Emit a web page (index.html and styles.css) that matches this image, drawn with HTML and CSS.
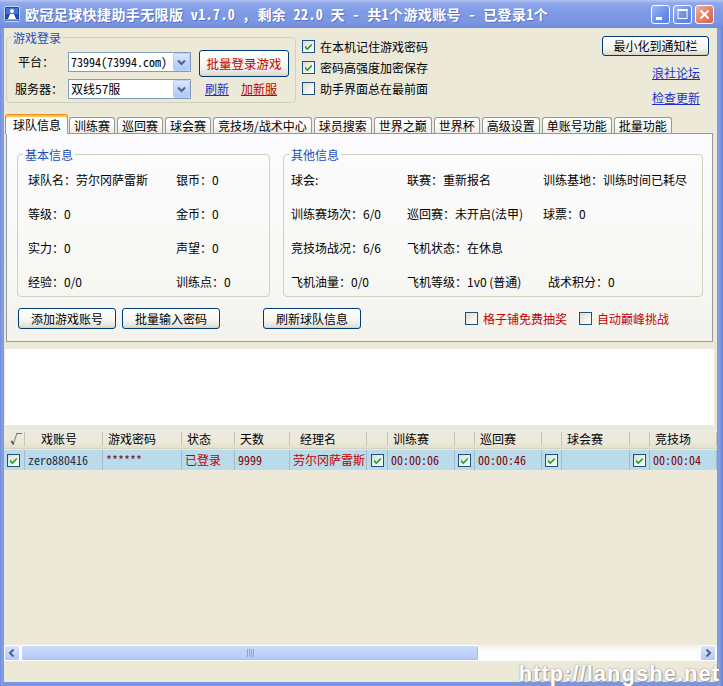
FILE: index.html
```html
<!DOCTYPE html>
<html lang="zh-CN">
<head>
<meta charset="utf-8">
<title>欧冠足球快捷助手无限版</title>
<link rel="stylesheet" href="styles.css">
</head>
<body>
<div class="window">
  <div class="titlebar">
    <span class="app-icon">
      <svg width="16" height="16" viewBox="0 0 16 16">
        <rect x="0.5" y="0.5" width="15" height="15" rx="1.5" fill="#1d4aa6" stroke="#c9d6f5"/>
        <rect x="2" y="2" width="12" height="6" fill="#3d78d8"/>
        <circle cx="8" cy="5" r="2" fill="#fff"/>
        <path d="M4 13 L6 8 L10 8 L12 13 Z" fill="#fff"/>
        <rect x="2" y="13" width="12" height="1.5" fill="#8fb0ea"/>
      </svg>
    </span>
    <span class="title">欧冠足球快捷助手无限版 v1.7.0 , 剩余 22.0 天 - 共1个游戏账号 - 已登录1个</span>
    <span class="tb-btns">
      <span class="tb-btn">
        <svg width="17" height="17" viewBox="0 0 17 17"><rect x="4" y="11" width="6" height="3" fill="#fff"/></svg>
      </span>
      <span class="tb-btn">
        <svg width="17" height="17" viewBox="0 0 17 17"><rect x="4" y="3.5" width="9" height="9" fill="none" stroke="#fff" stroke-width="1"/><rect x="4" y="3" width="9.5" height="2" fill="#fff"/></svg>
      </span>
      <span class="tb-btn close">
        <svg width="17" height="17" viewBox="0 0 17 17"><path d="M4.5 4.5 L12.5 12.5 M12.5 4.5 L4.5 12.5" stroke="#fff" stroke-width="2"/></svg>
      </span>
    </span>
  </div>

  <div class="client">
    <div class="top">
      <fieldset class="group login">
        <legend>游戏登录</legend>
        <div class="login-grid">
          <span class="lbl pt">平台：</span>
          <div class="combo"><span class="val mono">73994(73994.com)</span><span class="drop"><svg width="15" height="16" viewBox="0 0 15 16"><path d="M4 6.5 L7.5 10 L11 6.5" fill="none" stroke="#4d6185" stroke-width="2"/></svg></span></div>
          <button class="btn big red">批量登录游戏</button>
          <span class="lbl">服务器：</span>
          <div class="combo"><span class="val">双线57服</span><span class="drop"><svg width="15" height="16" viewBox="0 0 15 16"><path d="M4 6.5 L7.5 10 L11 6.5" fill="none" stroke="#4d6185" stroke-width="2"/></svg></span></div>
          <div class="srv-links"><a class="lnk blue">刷新</a><a class="lnk red">加新服</a></div>
        </div>
      </fieldset>

      <div class="opts">
        <label class="chk"><span class="box"><svg width="11" height="11" viewBox="0 0 11 11"><polygon points="2,4.6 4.3,6.9 8.8,2.4 8.8,4.7 4.3,9.2 2,6.9" fill="#21a121"/></svg></span>在本机记住游戏密码</label>
        <label class="chk"><span class="box"><svg width="11" height="11" viewBox="0 0 11 11"><polygon points="2,4.6 4.3,6.9 8.8,2.4 8.8,4.7 4.3,9.2 2,6.9" fill="#21a121"/></svg></span>密码高强度加密保存</label>
        <label class="chk"><span class="box"></span>助手界面总在最前面</label>
      </div>

      <div class="side">
        <button class="btn notify">最小化到通知栏</button>
        <a class="lnk blue l1">浪社论坛</a>
        <a class="lnk blue l2">检查更新</a>
      </div>
    </div>

    <div class="tabs">
      <span class="tab active">球队信息</span>
      <span class="tab">训练赛</span>
      <span class="tab">巡回赛</span>
      <span class="tab">球会赛</span>
      <span class="tab">竞技场/战术中心</span>
      <span class="tab">球员搜索</span>
      <span class="tab">世界之巅</span>
      <span class="tab">世界杯</span>
      <span class="tab">高级设置</span>
      <span class="tab">单账号功能</span>
      <span class="tab">批量功能</span>
    </div>

    <div class="pane">
      <div class="info">
        <fieldset class="group basic">
          <legend>基本信息</legend>
          <div class="grid-basic">
            <span>球队名：劳尔冈萨雷斯</span><span>银币：0</span>
            <span>等级：0</span><span>金币：0</span>
            <span>实力：0</span><span>声望：0</span>
            <span>经验：0/0</span><span>训练点：0</span>
          </div>
        </fieldset>
        <fieldset class="group other">
          <legend>其他信息</legend>
          <div class="grid-other">
            <span>球会:</span><span>联赛：重新报名</span><span>训练基地：训练时间已耗尽</span>
            <span>训练赛场次：6/0</span><span>巡回赛：未开启(法甲)</span><span>球票：0</span>
            <span>竞技场战况：6/6</span><span>飞机状态：在休息</span><span></span>
            <span>飞机油量：0/0</span><span>飞机等级：1v0 (普通)</span><span class="shift">战术积分：0</span>
          </div>
        </fieldset>
      </div>
      <div class="actions">
        <button class="btn act">添加游戏账号</button>
        <button class="btn act second">批量输入密码</button>
        <button class="btn act refresh">刷新球队信息</button>
        <label class="chk red-text lottery"><span class="box"></span>格子铺免费抽奖</label>
        <label class="chk red-text peak"><span class="box"></span>自动巅峰挑战</label>
      </div>
    </div>

    <div class="log"></div>

    <div class="list">
      <div class="lv-head">
        <span class="h c0">√</span>
        <span class="h c1">戏账号</span>
        <span class="h">游戏密码</span>
        <span class="h">状态</span>
        <span class="h">天数</span>
        <span class="h c5">经理名</span>
        <span class="h"></span>
        <span class="h">训练赛</span>
        <span class="h"></span>
        <span class="h">巡回赛</span>
        <span class="h"></span>
        <span class="h">球会赛</span>
        <span class="h"></span>
        <span class="h">竞技场</span>
      </div>
      <div class="lv-row">
        <span class="d ck"><span class="box"><svg width="11" height="11" viewBox="0 0 11 11"><polygon points="2,4.6 4.3,6.9 8.8,2.4 8.8,4.7 4.3,9.2 2,6.9" fill="#21a121"/></svg></span></span>
        <span class="d mono navy">zero880416</span>
        <span class="d mono maroon">******</span>
        <span class="d red-text">已登录</span>
        <span class="d mono maroon">9999</span>
        <span class="d red-text">劳尔冈萨雷斯</span>
        <span class="d ck ck4"><span class="box"><svg width="11" height="11" viewBox="0 0 11 11"><polygon points="2,4.6 4.3,6.9 8.8,2.4 8.8,4.7 4.3,9.2 2,6.9" fill="#21a121"/></svg></span></span>
        <span class="d mono maroon">00:00:06</span>
        <span class="d ck"><span class="box"><svg width="11" height="11" viewBox="0 0 11 11"><polygon points="2,4.6 4.3,6.9 8.8,2.4 8.8,4.7 4.3,9.2 2,6.9" fill="#21a121"/></svg></span></span>
        <span class="d mono maroon">00:00:46</span>
        <span class="d ck"><span class="box"><svg width="11" height="11" viewBox="0 0 11 11"><polygon points="2,4.6 4.3,6.9 8.8,2.4 8.8,4.7 4.3,9.2 2,6.9" fill="#21a121"/></svg></span></span>
        <span class="d"></span>
        <span class="d ck"><span class="box"><svg width="11" height="11" viewBox="0 0 11 11"><polygon points="2,4.6 4.3,6.9 8.8,2.4 8.8,4.7 4.3,9.2 2,6.9" fill="#21a121"/></svg></span></span>
        <span class="d mono maroon">00:00:04</span>
      </div>
      <div class="lv-fill"></div>
      <div class="hscroll">
        <span class="sb-btn"><svg width="14" height="14" viewBox="0 0 14 14"><path d="M8.5 3.5 L5 7 L8.5 10.5" fill="none" stroke="#4d6185" stroke-width="2"/></svg></span>
        <span class="thumb"><svg width="8" height="8" viewBox="0 0 8 8"><path d="M1.5 0 V8 M3.5 0 V8 M5.5 0 V8 M7.5 0 V8" stroke="#8ba3dc" stroke-width="1"/></svg></span>
        <span class="track"></span>
        <span class="sb-btn"><svg width="14" height="14" viewBox="0 0 14 14"><path d="M5.5 3.5 L9 7 L5.5 10.5" fill="none" stroke="#4d6185" stroke-width="2"/></svg></span>
      </div>
    </div>

    <div class="status"></div>
  </div>

  <div class="watermark">http://langshe.net</div>
</div>
</body>
</html>
```

FILE: styles.css
```css
* { box-sizing: border-box; }
html, body { margin: 0; padding: 0; }
body {
  width: 723px;
  height: 686px;
  overflow: hidden;
  background: #ece9d8;
  font: 12px/14px "Noto Sans CJK SC", "Liberation Sans", sans-serif;
  color: #000;
}
.mono { font-family: "Noto Sans Mono CJK SC", "Liberation Mono", monospace; }

.window {
  position: relative;
  width: 723px;
  height: 686px;
  display: flex;
  flex-direction: column;
  background: linear-gradient(90deg, #6f8ad8 0, #86a0e7 2px, #7b96e1 4px, #7b96e1 717px, #86a0e7 719px, #6680d2 723px);
}

/* title bar */
.titlebar {
  flex: none;
  height: 28px;
  display: flex;
  align-items: center;
  padding: 0 9px 0 4px;
  background: linear-gradient(#b4c5f3 0, #90a9ec 3px, #7f9ae5 12px, #7b96e2 22px, #6f8ad9 28px);
  color: #fff;
}
.app-icon { width: 16px; height: 16px; margin-right: 5px; display: flex; }
.title {
  flex: 1;
  white-space: nowrap;
  font-family: "Noto Sans Mono CJK SC", "Noto Sans CJK SC", monospace;
  font-weight: bold;
  font-size: 14px;
  line-height: 18px;
  letter-spacing: 0.4px;
  text-shadow: 1px 1px 0 #5a72c0;
}
.tb-btns { display: flex; gap: 3px; }
.tb-btn {
  width: 19px;
  height: 19px;
  border: 1px solid #fff;
  border-radius: 3px;
  background: linear-gradient(135deg, #9fb7f2, #6a8de6 60%, #5b7fe0);
  display: flex;
}
.tb-btn.close { background: linear-gradient(135deg, #f0b09e, #e07b62 60%, #d56649); }

/* client */
.client {
  flex: 1;
  margin: 0 6px 4px 4px;
  background: #ece9d8;
  display: flex;
  flex-direction: column;
  min-height: 0;
}

.top {
  flex: none;
  height: 86px;
  display: flex;
  align-items: flex-start;
  padding-top: 2px;
}

.group {
  margin: 0;
  border: 1px solid #d0d0bf;
  border-radius: 4px;
  min-width: 0;
}
.group legend {
  color: #1d50b8;
  padding: 0 2px;
  line-height: 15px;
  font-size: 12px;
}

.login {
  margin-left: 2px;
  width: 290px;
  padding: 7px 6px 3px 8px;
}
.login legend { margin-left: -4px; }
.login-grid {
  display: grid;
  grid-template-columns: 53px 123px 98px;
  grid-template-rows: 20px 20px;
  row-gap: 7px;
}
.lbl { align-self: center; }
.lbl.pt { padding-left: 3px; }

.combo {
  height: 20px;
  border: 1px solid #7f9db9;
  background: #fff;
  display: flex;
  align-items: center;
}
.combo .val { flex: 1; padding-left: 2px; white-space: nowrap; }
.drop {
  width: 17px;
  height: 18px;
  flex: none;
  display: flex;
  align-items: center;
  justify-content: center;
  border: 1px solid #bcd0f6;
  border-radius: 2px;
  background: linear-gradient(#dde7fd, #c3d4fb 50%, #b2c7f5);
}

.btn {
  font: inherit;
  color: #000;
  border: 1px solid #003c74;
  border-radius: 3px;
  background: linear-gradient(#ffffff, #f6f5f0 60%, #e4e1d6 90%, #d6d0c5);
  padding: 0;
  margin: 0;
  line-height: 14px;
}
.btn.red { color: #c40000; }
.btn.big {
  height: 27px;
  margin-left: 8px;
  width: 90px;
  align-self: start;
  margin-top: -2px;
  font-size: 12.5px;
}
.srv-links {
  display: flex;
  align-items: center;
  gap: 12px;
  padding-left: 14px;
}
.lnk { text-decoration: underline; cursor: pointer; }
.lnk.blue { color: #1a2fd0; }
.lnk.red { color: #c40000; }

.opts {
  margin-left: 6px;
  margin-top: 6px;
  display: flex;
  flex-direction: column;
}
.chk {
  height: 21px;
  display: flex;
  align-items: center;
  gap: 5px;
  white-space: nowrap;
}
.box {
  width: 13px;
  height: 13px;
  flex: none;
  border: 1px solid #1c5180;
  background: linear-gradient(135deg, #dcdcd6, #f4f4f0 60%, #fff);
  display: flex;
}

.side {
  margin-left: auto;
  margin-right: 8px;
  display: flex;
  flex-direction: column;
  align-items: flex-end;
}
.btn.notify { width: 107px; height: 20px; margin-top: 6px; }
.side .l1 { margin-top: 10px; margin-right: 9px; }
.side .l2 { margin-top: 11px; margin-right: 9px; }

/* tabs */
.tabs {
  flex: none;
  height: 19px;
  display: flex;
  align-items: flex-end;
  margin-left: 1px;
  position: relative;
  z-index: 1;
}
.tab {
  height: 16px;
  padding: 0 4px;
  margin-left: 2px;
  border: 1px solid #919b9c;
  border-bottom: 0;
  border-radius: 3px 3px 0 0;
  background: linear-gradient(#ffffff, #fbfbf9 50%, #ecebe4);
  line-height: 15px;
  white-space: nowrap;
}
.tab.active {
  height: 20px;
  margin-left: 0;
  margin-right: -1px;
  margin-bottom: -1px;
  padding: 1px 6px 0 7px;
  border-top: 1px solid #e68b2c;
  box-shadow: inset 0 2px 0 #ffc73c;
  background: #fcfcfe;
  line-height: 17px;
}
.tab.active + .tab { margin-left: 2px; }

.pane {
  flex: none;
  margin-left: 2px;
  width: 707px;
  height: 209px;
  border: 1px solid #919b9c;
  background: linear-gradient(#fcfcfe, #f7f7f4 70%, #f3f2ed);
  padding: 13px 9px 11px 10px;
}
.info { display: flex; gap: 13px; align-items: flex-start; }
.basic { width: 253px; padding: 11px 10px 7px 10px; }
.basic legend { margin-left: -5px; }
.other { width: 420px; padding: 11px 7px 7px 7px; }
.other legend { margin-left: -2px; }
.grid-basic, .grid-other { display: grid; row-gap: 20px; white-space: nowrap; }
.grid-basic { grid-template-columns: 148px auto; }
.grid-other { grid-template-columns: 116px 136px auto; }
.shift { padding-left: 5px; }

.actions {
  margin-top: 11px;
  padding-left: 1px;
  display: flex;
  align-items: center;
}
.btn.act { width: 98px; height: 21px; }
.actions .second { margin-left: 6px; }
.actions .refresh { margin-left: 43px; }
.red-text { color: #c40000; }
.lottery { margin-left: 104px; }
.peak { margin-left: 12px; }

.log {
  flex: none;
  margin: 7px 3px 0 1px;
  height: 76px;
  background: #fff;
}

/* list view */
.list {
  flex: none;
  margin-top: 5px;
  height: 231px;
  display: flex;
  flex-direction: column;
  background: #ece9d8;
}
.lv-head, .lv-row {
  display: grid;
  grid-template-columns: 21px 78px 79px 53px 55px 77px 21px 67px 20px 67px 20px 68px 20px 67px;
}
.lv-head {
  height: 19px;
  border-bottom: 1px solid #d6d2c2;
  background: linear-gradient(#ecebe2, #ece9d8 70%, #e2dfcf);
}
.h {
  line-height: 17px;
  padding-left: 5px;
  white-space: nowrap;
  background: linear-gradient(#c7c5b2, #c7c5b2) right 2px / 1px 14px no-repeat;
}
.h.c0 { padding-left: 6px; }
.h.c1 { padding-left: 16px; }
.h.c5 { padding-left: 10px; }
.lv-row {
  margin-top: 1px;
  height: 20px;
  background: #b9dbea;
}
.d {
  line-height: 20px;
  padding-left: 3px;
  white-space: nowrap;
  overflow: hidden;
  border-right: 1px solid #a3bccb;
}
.d.ck { display: flex; align-items: center; }
.d.ck4 { padding-left: 4px; }
.navy { color: #2a2a48; }
.maroon { color: #800000; }

.lv-fill { flex: 1; }
.hscroll {
  height: 16px;
  display: flex;
  background: linear-gradient(#f3f1ea, #fefefe 40%, #fdfdfc);
  padding-right: 1px;
}
.sb-btn {
  width: 16px;
  height: 16px;
  flex: none;
  border: 1px solid #fff;
  border-radius: 2px;
  background: linear-gradient(#d9e4fd, #c1d3fb 60%, #b4c8f6);
  display: flex;
  align-items: center;
  justify-content: center;
}
.thumb {
  margin-left: 1px;
  width: 458px;
  height: 16px;
  border: 1px solid #fff;
  border-radius: 2px;
  background: linear-gradient(#cbdafd, #bfd1fb 60%, #b4c8f6);
  box-shadow: inset -1px -1px 0 #a8bdf0;
  display: flex;
  align-items: center;
  justify-content: center;
}
.track { flex: 1; }

.status { flex: 1; }

.watermark {
  position: absolute;
  right: 3px;
  bottom: 0;
  font: bold 22px/24px "Liberation Sans", sans-serif;
  letter-spacing: 1px;
  color: #fff;
  text-shadow: 0 0 2px #8a8a8a, 1px 1px 1px #9a9a9a;
}
```
